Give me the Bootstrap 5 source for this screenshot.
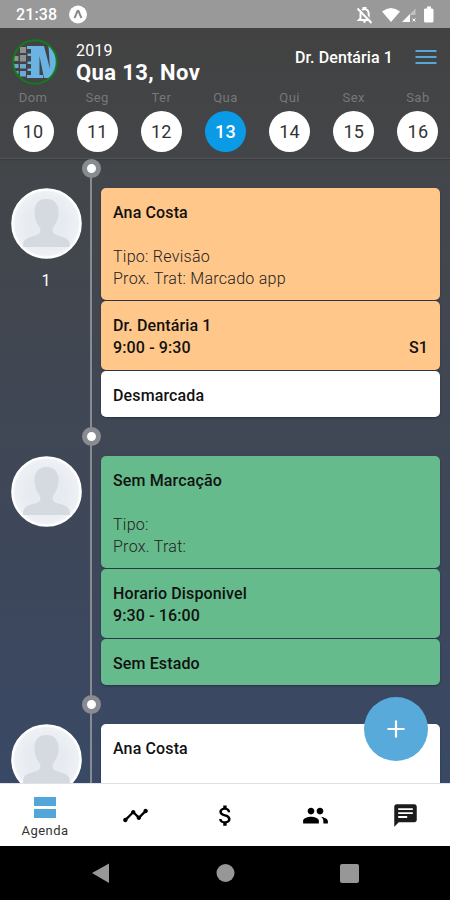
<!DOCTYPE html>
<html lang="pt">
<head>
<meta charset="utf-8">
<meta name="viewport" content="width=device-width, initial-scale=1">
<title>Agenda</title>
<link href="https://cdn.jsdelivr.net/npm/bootstrap@5.3.0/dist/css/bootstrap.min.css" rel="stylesheet">
<style>
body{font-family:Roboto,"Liberation Sans",sans-serif;color:#111;background:#000}
svg{display:block;flex:none}
.screen{width:450px;height:900px;background:linear-gradient(#424242 28px,#43464a 180px,#404755 430px,#3b4861 700px,#394965 783px)}
.status{height:28px;background:#999;color:#fff;padding:2px 14px 0 16px}
.clock{font-size:16px;font-weight:500;line-height:26px;letter-spacing:.1px}
.app-head{height:131px;border-bottom:1px solid #505357;box-shadow:0 1px 1px #0002}
.title-row{height:60px;padding:0 13px 0 11px}
.logo{margin-top:11px}
.titles{margin-left:17px;padding-top:14px}
.year{font-size:16px;line-height:18px;letter-spacing:.15px}
.today{font-size:22px;line-height:25px;font-weight:700;letter-spacing:.4px}
.doctor{font-size:16px;font-weight:500;letter-spacing:.1px;margin:-1px -2px 0 0}
.week{display:grid;grid-template-columns:repeat(7,1fr);padding:0 0 0 1px}
.wd{font-size:13px;line-height:20px;letter-spacing:.5px;color:#77787a}
.num{width:41px;height:41px;font-size:18px;color:#333;background:#fff;margin-top:2.5px;letter-spacing:.2px}
.num.on{background:#0b9ae6;color:#fff;font-weight:500}
.feed{height:624px}
.slot{height:268px}
.who{width:91px;padding:29px 0 0 11px}
.face{width:71px;height:71px}
.count{font-size:16px;line-height:20px;margin-top:12px;width:70px}
.rail{width:0;position:relative}
.rail::before{content:"";position:absolute;left:-1px;top:10px;width:2px;height:268px;background:#888b91}
.dot{position:absolute;z-index:1;left:-9.5px;top:0;width:19px;height:19px;border-radius:50%;background:#fff;border:5px solid #888b8f}
.blocks{padding:29px 10px 0 10px;gap:1.5px;font-size:16px;line-height:22px}
.tile{border-radius:5px;padding:13.5px 12px 0;box-shadow:0 1px 2px #1238}
.t1{height:111.5px}.t2{height:68.5px}.t3{height:46px}
.orange{background:#ffc789}.green{background:#66bb8c}.plain{background:#fff}
.strong{font-weight:500;letter-spacing:.13px}
.info{font-weight:300;letter-spacing:.27px;color:#222;margin-top:22px}
.fab{position:absolute;z-index:3;right:22.5px;bottom:22.5px;width:64px;height:64px;background:#58aadb}
.tabs{height:63px;background:#fff;position:relative;z-index:2}
.tabs>div{width:90px}
.tab-name{font-size:13px;line-height:16px;letter-spacing:.45px;color:#333}
.sys{height:54px;background:#000}
</style>
<script src="https://cdn.jsdelivr.net/npm/bootstrap@5.3.0/dist/js/bootstrap.bundle.min.js"></script>
</head>
<body>
<svg width="0" height="0" class="position-absolute" aria-hidden="true">
<defs>
<radialGradient id="faceBg"><stop offset=".5" stop-color="#e7ebf1"/><stop offset=".92" stop-color="#edf0f4"/><stop offset="1" stop-color="#fff"/></radialGradient>
<symbol id="face" viewBox="0 0 71 71">
<circle cx="35.5" cy="35.5" r="34.3" fill="url(#faceBg)" stroke="#fff" stroke-width="2"/>
<path d="M35.5 11C27 11 23 17 23.500 26C24 33 27 37 29 40C30 44 29 46 24 47.500C17 49.500 12 50 12 59H59C59 50 54 49.500 47 47.500C42 46 41 44 42 40C44 37 47 33 47.500 26C48 17 44 11 35.500 11Z" fill="#d5dae1"/>
</symbol>
</defs>
</svg>
<main class="screen d-flex flex-column overflow-hidden">
  <div class="status d-flex align-items-center justify-content-between">
    <div class="d-flex align-items-center">
      <span class="clock">21:38</span>
      <svg class="ms-2" width="24" height="20" viewBox="0 0 24 20"><circle cx="13" cy="9.500" r="9" fill="#fff"/><path d="M9.500 13Q11.500 9 12.200 6.500Q13 5 13.800 6.500Q14.500 9 16.500 13" fill="none" stroke="#8a8a8a" stroke-width="2"/></svg>
    </div>
    <svg width="80" height="20" viewBox="0 0 80 20" fill="#fff">
      <path d="M4.500 13.500V9.500Q4.500 5 7.500 4.300V3H9.500V4.300Q12.700 5 12.700 9.500V13.500L14 15H3Z" fill="none" stroke="#fff" stroke-width="2"/><path d="M2.500 2.500L16.500 16.500" stroke="#999" stroke-width="1.500"/><path d="M1.500 3.500L15.500 18" stroke="#fff" stroke-width="1.900"/><path d="M7 16h3q-.3 2-1.500 2T7 16Z"/>
      <path d="M26 6.500Q35 -.500 44 6.500L35 17Z"/><path d="M46 17L54 9V17Z"/><path d="M54 9L59.500 3.500V10H54Z" opacity=".4"/><path d="M56.500 13.500l3 3M59.500 13.500l-3 3" stroke="#fff" stroke-width="1"/>
      <path d="M69 3.500H71V1.500H75V3.500H76Q77.500 3.500 77.500 5V16Q77.500 17.500 76 17.500H69.500Q68 17.500 68 16V5Q68 3.500 69 3.500Z"/>
    </svg>
  </div>

  <header class="app-head text-white">
    <div class="title-row d-flex">
      <svg class="logo" width="48" height="48" viewBox="0 0 48 48">
        <defs><clipPath id="logoClip"><circle cx="24" cy="23" r="21.500"/></clipPath></defs>
        <g clip-path="url(#logoClip)">
          <path d="M9 8h6v6H9zM3 17h4.500v5H3zM9 16h6v6.500H9z" fill="#8d9295"/>
          <path d="M3 25h4.500v4H3zM9 25h6v4.500H9zM4 32h3.500v3H4zM9 32h6v5.500H9z" fill="#6fa9d1"/>
          <path d="M16 7H33L39 30L37.500 7H46V39H33L28.500 17V36H32V39H16V36H20V32H16.500V29.500H20V25H16.500V22.500H20V17H16.500V14.500H20V10H16Z" fill="#6bb3e3"/>
        </g>
        <circle cx="24" cy="23" r="21.800" fill="none" stroke="#137b1c" stroke-width="2"/>
      </svg>
      <div class="titles flex-grow-1">
        <div class="year">2019</div>
        <div class="today">Qua 13, Nov</div>
      </div>
      <div class="d-flex align-items-center">
        <span class="doctor">Dr. Dentária 1</span>
        <svg class="ms-4" width="22" height="16" viewBox="0 0 22 16"><path d="M.500 1H21.500M.500 7H21.500M.500 13H21.500" stroke="#57a7d8" stroke-width="2"/></svg>
      </div>
    </div>
    <div class="week">
      <div class="d-flex flex-column align-items-center"><span class="wd">Dom</span><span class="num rounded-circle d-flex align-items-center justify-content-center">10</span></div>
      <div class="d-flex flex-column align-items-center"><span class="wd">Seg</span><span class="num rounded-circle d-flex align-items-center justify-content-center">11</span></div>
      <div class="d-flex flex-column align-items-center"><span class="wd">Ter</span><span class="num rounded-circle d-flex align-items-center justify-content-center">12</span></div>
      <div class="d-flex flex-column align-items-center"><span class="wd">Qua</span><span class="num on rounded-circle d-flex align-items-center justify-content-center">13</span></div>
      <div class="d-flex flex-column align-items-center"><span class="wd">Qui</span><span class="num rounded-circle d-flex align-items-center justify-content-center">14</span></div>
      <div class="d-flex flex-column align-items-center"><span class="wd">Sex</span><span class="num rounded-circle d-flex align-items-center justify-content-center">15</span></div>
      <div class="d-flex flex-column align-items-center"><span class="wd">Sab</span><span class="num rounded-circle d-flex align-items-center justify-content-center">16</span></div>
    </div>
  </header>

  <section class="feed position-relative overflow-hidden">
    <article class="slot d-flex">
      <div class="who flex-shrink-0"><svg class="face"><use href="#face"/></svg><div class="count text-center text-white">1</div></div>
      <div class="rail"><span class="dot"></span></div>
      <div class="blocks d-flex flex-column flex-grow-1">
        <div class="tile t1 orange"><div class="strong">Ana Costa</div><div class="info">Tipo: Revisão<br>Prox. Trat: Marcado app</div></div>
        <div class="tile t2 orange strong"><div>Dr. Dentária 1</div><div class="d-flex justify-content-between"><span>9:00 - 9:30</span><span>S1</span></div></div>
        <div class="tile t3 plain strong">Desmarcada</div>
      </div>
    </article>
    <article class="slot d-flex">
      <div class="who flex-shrink-0"><svg class="face"><use href="#face"/></svg></div>
      <div class="rail"><span class="dot"></span></div>
      <div class="blocks d-flex flex-column flex-grow-1">
        <div class="tile t1 green"><div class="strong">Sem Marcação</div><div class="info">Tipo:<br>Prox. Trat:</div></div>
        <div class="tile t2 green strong"><div>Horario Disponivel</div><div>9:30 - 16:00</div></div>
        <div class="tile t3 green strong">Sem Estado</div>
      </div>
    </article>
    <article class="slot d-flex">
      <div class="who flex-shrink-0"><svg class="face"><use href="#face"/></svg></div>
      <div class="rail"><span class="dot"></span></div>
      <div class="blocks d-flex flex-column flex-grow-1">
        <div class="tile t1 plain"><div class="strong">Ana Costa</div></div>
      </div>
    </article>
    <button class="fab btn rounded-circle border-0 p-0 d-flex align-items-center justify-content-center" aria-label="Adicionar"><svg width="18" height="18" viewBox="0 0 18 18"><path d="M9 .500V17.500M.500 9H17.500" stroke="#fff" stroke-width="2.200"/></svg></button>
  </section>

  <nav class="tabs d-flex flex-shrink-0 border-top">
    <div class="d-flex flex-column align-items-center pt-2"><svg class="mt-1" width="24" height="27" viewBox="0 0 24 27"><path d="M1 1H23V10H1ZM1 13H23V22H1Z" fill="#52a6da"/></svg><span class="tab-name">Agenda</span></div>
    <div class="d-flex align-items-center justify-content-center"><svg width="27" height="27" viewBox="0 0 24 24"><path d="M23 8c0 1.100-.9 2-2 2-.180 0-.350-.020-.510-.070l-3.560 3.550c.050.160.070.340.070.520 0 1.100-.9 2-2 2s-2-.9-2-2c0-.180.020-.360.070-.520l-2.550-2.550c-.160.050-.340.070-.520.070s-.360-.020-.520-.070l-4.550 4.560c.050.160.070.330.070.510 0 1.100-.9 2-2 2s-2-.9-2-2 .9-2 2-2c.180 0 .350.020.510.070l4.560-4.550C8.020 9.360 8 9.180 8 9c0-1.100.9-2 2-2s2 .9 2 2c0 .180-.020.360-.070.520l2.550 2.550c.160-.050.340-.070.520-.070s.360.020.520.070l3.550-3.560C19.020 8.350 19 8.180 19 8c0-1.100.9-2 2-2s2 .9 2 2z"/></svg></div>
    <div class="d-flex align-items-center justify-content-center"><svg width="27" height="27" viewBox="0 0 24 24"><path d="M11.800 10.900c-2.270-.590-3-1.200-3-2.150 0-1.090 1.010-1.850 2.700-1.850 1.780 0 2.440.850 2.500 2.100h2.210c-.070-1.720-1.120-3.300-3.210-3.810V3h-3v2.160c-1.940.420-3.500 1.680-3.500 3.610 0 2.310 1.910 3.460 4.700 4.130 2.500.6 3 1.480 3 2.410 0 .690-.490 1.790-2.700 1.790-2.060 0-2.870-.920-2.980-2.100h-2.200c.120 2.190 1.760 3.420 3.680 3.830V21h3v-2.150c1.950-.370 3.500-1.500 3.500-3.550 0-2.840-2.430-3.810-4.700-4.400z"/></svg></div>
    <div class="d-flex align-items-center justify-content-center"><svg width="27" height="27" viewBox="0 0 24 24"><path d="M16.670 13.130C18.040 14.060 19 15.320 19 17v2h4v-2c0-2.180-3.570-3.470-6.330-3.870zM16 11c1.660 0 2.990-1.340 2.990-3S17.660 5 16 5c-1.660 0-3 1.340-3 3s1.340 3 3 3zm-8 0c1.660 0 2.990-1.340 2.990-3S9.660 5 8 5C6.340 5 5 6.340 5 8s1.340 3 3 3zm0 2c-2.330 0-7 1.170-7 3.500V19h14v-2.500c0-2.330-4.670-3.500-7-3.500z"/></svg></div>
    <div class="d-flex align-items-center justify-content-center"><svg width="27" height="27" viewBox="0 0 24 24"><path fill="#1c1c1c" fill-rule="evenodd" d="M20 2H4c-1.100 0-1.990.9-1.990 2L2 22l4-4h14c1.100 0 2-.9 2-2V4c0-1.100-.9-2-2-2zM5.500 5.500h13v1.700h-13zM5.500 9h13v1.700h-13zM5.500 12.500h8v1.700h-8z"/></svg></div>
  </nav>
  <footer class="sys flex-shrink-0 d-flex justify-content-center">
    <svg width="450" height="54" viewBox="0 0 450 54" fill="#979797"><path d="M92 27L109 17.500V37Z"/><circle cx="225.500" cy="27" r="9"/><rect x="340" y="18" width="19" height="19" rx="2"/></svg>
  </footer>
</main>
</body>
</html>
